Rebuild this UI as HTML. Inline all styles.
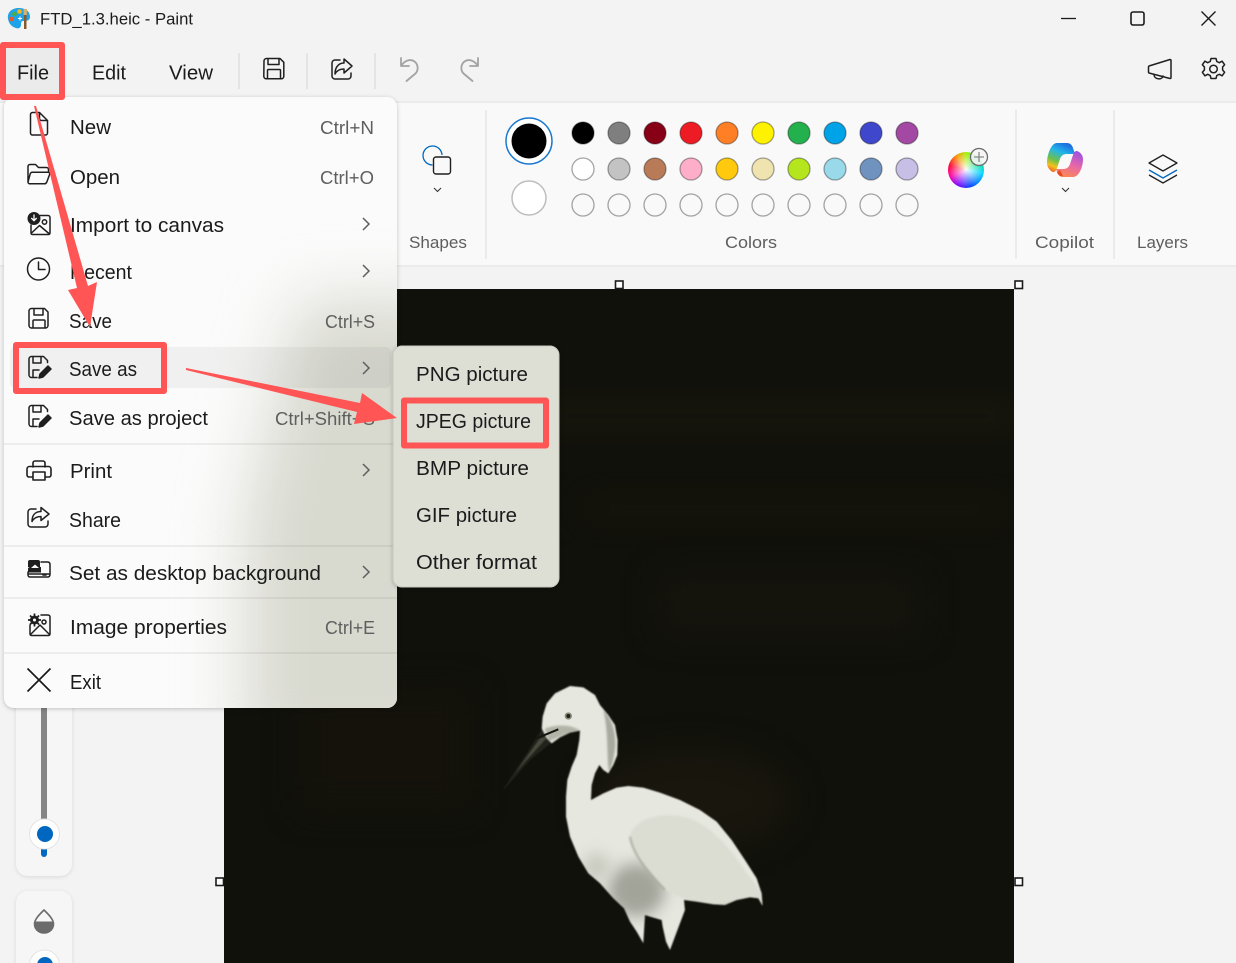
<!DOCTYPE html>
<html lang="en"><head><meta charset="utf-8"><title>FTD_1.3.heic - Paint</title>
<style>
html,body{margin:0;padding:0;width:1236px;height:963px;overflow:hidden;background:#f3f3f3}
#wheel{position:absolute;left:948px;top:152px;width:36px;height:36px;border-radius:50%;background:radial-gradient(circle,rgba(255,255,255,.95) 0,rgba(255,255,255,0) 70%),conic-gradient(#a8f000,#00e080 60deg,#00d8ff 100deg,#0040ff 165deg,#8000ff 210deg,#ff00a0 250deg,#ff0030 285deg,#ff9000 325deg,#a8f000)}
svg{position:absolute;left:0;top:0}
text{font-family:"Liberation Sans",sans-serif}
.m{font-size:20px;fill:#1b1b1b}
.s{font-size:18px;fill:#5f5f5f}
.l{font-size:17px;fill:#5e5e5e}
.i{fill:none;stroke:#1f1f1f;stroke-width:1.5;stroke-linejoin:round;stroke-linecap:round}
</style></head><body>
<svg width="1236" height="963" viewBox="0 0 1236 963" xmlns="http://www.w3.org/2000/svg">
<defs>
<filter id="b40" x="-50%" y="-50%" width="200%" height="200%" color-interpolation-filters="sRGB"><feGaussianBlur stdDeviation="32"/></filter>
<filter id="b14" x="-80%" y="-80%" width="260%" height="260%" color-interpolation-filters="sRGB"><feGaussianBlur stdDeviation="16"/></filter>
<filter id="b3" x="-100%" y="-100%" width="300%" height="300%" color-interpolation-filters="sRGB"><feGaussianBlur stdDeviation="22"/></filter>
<filter id="b1" x="-30%" y="-30%" width="160%" height="160%" color-interpolation-filters="sRGB"><feGaussianBlur stdDeviation="2"/></filter>
<filter id="soft" x="-10%" y="-10%" width="120%" height="120%" color-interpolation-filters="sRGB"><feGaussianBlur stdDeviation="2.200"/></filter>
<filter id="sh" x="-10%" y="-10%" width="120%" height="120%" color-interpolation-filters="sRGB"><feDropShadow dx="0" dy="1" stdDeviation="2" flood-color="#000" flood-opacity=".22"/></filter>
<filter id="sh2" x="-20%" y="-20%" width="140%" height="140%" color-interpolation-filters="sRGB"><feDropShadow dx="0" dy="1" stdDeviation="2" flood-color="#000" flood-opacity=".1"/></filter>
<clipPath id="mc"><rect x="4" y="97" width="393" height="611" rx="10"/></clipPath>
<clipPath id="ic"><rect x="224" y="289" width="790" height="674"/></clipPath>
<clipPath id="bc"><polygon points="185,205 188,170 200,130 225,100 270,78 310,82 345,105 360,135 385,165 405,195 413,240 412,285 400,315 385,340 370,330 358,315 345,340 335,375 333,420 370,400 410,383 445,378 490,383 540,398 600,420 660,450 710,485 755,540 795,600 830,655 845,700 848,738 835,715 810,712 770,720 735,735 700,733 650,725 612,720 615,750 600,790 585,830 570,870 558,845 548,800 545,780 510,770 495,765 490,850 470,815 450,785 432,745 400,715 360,670 325,640 295,590 270,530 258,470 258,410 262,360 275,320 290,285 298,240 300,212 270,218 240,232 215,250 200,235"/></clipPath>
<linearGradient id="cl" x1="0.6" y1="0" x2="0.2" y2="1"><stop offset="0" stop-color="#1d6fe0"/><stop offset=".3" stop-color="#21b5e8"/><stop offset=".62" stop-color="#6ec04a"/><stop offset=".82" stop-color="#f2c21a"/><stop offset="1" stop-color="#f0602a"/></linearGradient>
<linearGradient id="cr" x1="0.7" y1="0" x2="0.3" y2="1"><stop offset="0" stop-color="#a050e0"/><stop offset=".5" stop-color="#e868a8"/><stop offset="1" stop-color="#fb8a50"/></linearGradient>
</defs>

<!-- Ribbon -->
<rect x="0" y="101" width="1236" height="166" fill="#ebebeb"/>
<rect x="0" y="103" width="1236" height="162" fill="#f9f9f9"/>
<g fill="#ebebeb"><rect x="485" y="110" width="2" height="149"/><rect x="1015" y="110" width="2" height="149"/><rect x="1113" y="110" width="2" height="149"/></g>
<rect x="0" y="267" width="1236" height="696" fill="#f3f3f3"/>

<!-- Title bar -->
<path d="M8 19c-1-7 4-11 11-11 6 0 11 3 11 9 0 3-3 4-5 4l-2 0c-2 0-2 2-2 4 0 3-3 4-5 3-4-1-7-4-8-9z" fill="#1fa3e8"/>
<circle cx="14.500" cy="14" r="2.300" fill="#4caf3a"/><circle cx="19.500" cy="11.500" r="2.300" fill="#f4b81c"/><circle cx="11.500" cy="19" r="2.300" fill="#e8582a"/>
<path d="M18 18.500h4M20 16.500v4" stroke="#fff" stroke-width="1"/>
<rect x="24" y="15" width="2.500" height="14" fill="#8a5a2a"/><rect x="23.600" y="9" width="3.300" height="6" fill="#d8b070"/>
<text x="40" y="24.500" font-size="17" fill="#1b1b1b" textLength="153" lengthAdjust="spacingAndGlyphs">FTD_1.3.heic - Paint</text>
<path d="M1061 18.500h15" stroke="#1b1b1b" stroke-width="1.300"/>
<rect x="1131" y="12" width="13" height="13" rx="2" fill="none" stroke="#1b1b1b" stroke-width="1.600"/>
<path d="M1201.500 11.500l14 14M1215.500 11.500l-14 14" stroke="#1b1b1b" stroke-width="1.400"/>

<!-- Toolbar -->
<rect x="5" y="47" width="55" height="49" fill="#ebebeb"/>
<text class="m" x="17" y="79.500" textLength="32" lengthAdjust="spacingAndGlyphs">File</text>
<text class="m" x="92" y="79.500" textLength="34" lengthAdjust="spacingAndGlyphs">Edit</text>
<text class="m" x="169" y="79.500" textLength="44" lengthAdjust="spacingAndGlyphs">View</text>
<g fill="#e4e4e4"><rect x="238" y="53" width="2" height="36"/><rect x="306" y="53" width="2" height="36"/><rect x="374" y="53" width="2" height="36"/></g>
<g class="i" stroke-width="1.600">
<path d="M264 61a2.500 2.500 0 0 1 2.500-2.500h13.500l3.800 3.800v14a2.500 2.500 0 0 1-2.500 2.500h-15a2.500 2.500 0 0 1-2.500-2.500zM268 58.500v6h11v-6M267.500 78.500v-8a1 1 0 0 1 1-1h11a1 1 0 0 1 1 1v8"/>
<path d="M340 60h-5a3 3 0 0 0-3 3v13a3 3 0 0 0 3 3h13a3 3 0 0 0 3-3v-3M344 59l8 7-8 7v-4c-4 0-7 1-9 5 0-6 3-11 9-11z"/>
</g>
<g fill="none" stroke="#a3a3a3" stroke-width="1.800" stroke-linecap="round" stroke-linejoin="round">
<path d="M401 58v8h8M401.500 65.500c3-5 9-7 13-4 4 3 4 9 1 12l-9 7.500"/>
<path d="M478 58v8h-8M477.500 65.500c-3-5-9-7-13-4-4 3-4 9-1 12l9 7.500"/>
</g>
<g class="i" stroke-width="1.600">
<path d="M1149 66l21-6.500a1 1 0 0 1 1 1v17a1 1 0 0 1-1 1l-21-5.500a1 1 0 0 1-.5-1v-5a1 1 0 0 1 .5-1zM1154 74.500c0 5 8 6 9 1.500"/>
<path d="M1211 58.500h5l.8 3 2.500 1.200 2.800-1.500 2.500 3.500-2 2.300v3l2 2.300-2.500 3.500-2.800-1.500-2.500 1.200-.8 3h-5l-.8-3-2.500-1.200-2.800 1.500-2.500-3.500 2-2.300v-3l-2-2.300 2.500-3.500 2.800 1.500 2.500-1.200z"/>
<circle cx="1213.500" cy="69" r="3.800"/>
</g>

<!-- Shapes icon -->
<path d="M432.500 165a9.500 9.500 0 1 1 9.500-10" fill="none" stroke="#0067c0" stroke-width="1.300"/>
<rect x="433.500" y="157" width="17" height="17" rx="2.500" fill="#f9f9f9" stroke="#1f1f1f" stroke-width="1.400"/>
<path d="M434 188l3.500 3.500 3.500-3.500" fill="none" stroke="#333" stroke-width="1.100"/>
<text class="l" x="409" y="248" textLength="58" lengthAdjust="spacingAndGlyphs">Shapes</text>

<!-- Colors -->
<circle cx="529" cy="141" r="23" fill="#fff" stroke="#1a78cf" stroke-width="1.500"/>
<circle cx="529" cy="141" r="17.500" fill="#000"/>
<circle cx="529" cy="198" r="17" fill="#fff" stroke="#bdbdbd" stroke-width="1.500"/>
<g stroke="#000" stroke-opacity=".35" stroke-width="1.300">
<circle cx="583" cy="133" r="11" fill="#000"/><circle cx="619" cy="133" r="11" fill="#7f7f7f"/><circle cx="655" cy="133" r="11" fill="#880015"/><circle cx="691" cy="133" r="11" fill="#ed1c24"/><circle cx="727" cy="133" r="11" fill="#ff7f27"/><circle cx="763" cy="133" r="11" fill="#fff200"/><circle cx="799" cy="133" r="11" fill="#22b14c"/><circle cx="835" cy="133" r="11" fill="#00a2e8"/><circle cx="871" cy="133" r="11" fill="#3f48cc"/><circle cx="907" cy="133" r="11" fill="#a349a4"/>
<circle cx="583" cy="169" r="11" fill="#fff"/><circle cx="619" cy="169" r="11" fill="#c3c3c3"/><circle cx="655" cy="169" r="11" fill="#b97a57"/><circle cx="691" cy="169" r="11" fill="#ffaec9"/><circle cx="727" cy="169" r="11" fill="#ffc90e"/><circle cx="763" cy="169" r="11" fill="#efe4b0"/><circle cx="799" cy="169" r="11" fill="#b5e61d"/><circle cx="835" cy="169" r="11" fill="#99d9ea"/><circle cx="871" cy="169" r="11" fill="#7092be"/><circle cx="907" cy="169" r="11" fill="#c8bfe7"/>
<circle cx="583" cy="205" r="11" fill="none"/><circle cx="619" cy="205" r="11" fill="none"/><circle cx="655" cy="205" r="11" fill="none"/><circle cx="691" cy="205" r="11" fill="none"/><circle cx="727" cy="205" r="11" fill="none"/><circle cx="763" cy="205" r="11" fill="none"/><circle cx="799" cy="205" r="11" fill="none"/><circle cx="835" cy="205" r="11" fill="none"/><circle cx="871" cy="205" r="11" fill="none"/><circle cx="907" cy="205" r="11" fill="none"/>
</g>
<text class="l" x="725" y="248" textLength="52" lengthAdjust="spacingAndGlyphs">Colors</text>

<!-- Copilot -->
<path d="M1057 143h10c3 0 5 2 6 5l2 6h-8c-4 0-6 2-7 5l-3 9c-1 3-2 4-4 4-3-1-6-5-6-9 0-8 4-20 10-20z" fill="url(#cl)"/>
<path d="M1073 177h-10c-3 0-5-2-6-5l-1-3h7c4 0 6-2 7-5l3-9c1-3 2-4 4-4 3 1 6 4 6 8 0 8-4 18-10 18z" fill="url(#cr)"/>
<path d="M1060 170l3 6c-3 1-5-1-6-4z" fill="#e8482a"/>
<path d="M1062 188l3.500 3.500 3.500-3.500" fill="none" stroke="#333" stroke-width="1.100"/>
<text class="l" x="1035" y="248" textLength="59" lengthAdjust="spacingAndGlyphs">Copilot</text>

<!-- Layers -->
<path d="M1163 155l14 8-14 8-14-8z" fill="none" stroke="#1f1f1f" stroke-width="1.300" stroke-linejoin="round"/>
<path d="M1149 170l14 8 14-8" fill="none" stroke="#0067c0" stroke-width="1.300"/>
<path d="M1149 175l14 8 14-8" fill="none" stroke="#1f1f1f" stroke-width="1.300"/>
<text class="l" x="1137" y="248" textLength="51" lengthAdjust="spacingAndGlyphs">Layers</text>

<!-- Left panels -->
<rect x="16" y="650" width="56" height="226" rx="12" fill="#f6f6f6" filter="url(#sh2)"/>
<rect x="41" y="700" width="6" height="125" fill="#858585"/>
<rect x="41" y="835" width="6" height="22" rx="3" fill="#0067c0"/>
<circle cx="44.500" cy="834" r="15" fill="#fff" stroke="#e4e4e4"/>
<circle cx="45" cy="834" r="8" fill="#0067c0"/>
<rect x="16" y="891" width="56" height="90" rx="12" fill="#f6f6f6" filter="url(#sh2)"/>
<path d="M44 910C48 914 53.500 919 53.500 924a9.500 9 0 0 1-19 0C34.500 919 40 914 44 910z" fill="#f6f6f6" stroke="#6b6b6b" stroke-width="1.600" stroke-linejoin="round"/>
<path d="M34.500 921.500h19c.3 1 .3 1.500.3 2.500a9.800 9 0 0 1-19.600 0c0-1 0-1.500.3-2.500z" fill="#6b6b6b"/>
<circle cx="44.500" cy="965" r="15" fill="#fff" stroke="#e4e4e4"/>
<circle cx="45" cy="965" r="8" fill="#0067c0"/>

<!-- Canvas image -->
<rect x="224" y="289" width="790" height="674" fill="#10110b"/>
<g clip-path="url(#ic)">
<rect x="420" y="405" width="600" height="22" fill="#1c180d" filter="url(#b14)"/>
<rect x="580" y="495" width="430" height="28" fill="#15130b" filter="url(#b14)"/>
<rect x="660" y="575" width="260" height="60" fill="#15140d" filter="url(#b14)"/>
<rect x="300" y="690" width="170" height="120" fill="#14120b" filter="url(#b14)"/>
<ellipse cx="690" cy="800" rx="100" ry="50" fill="#19160d" filter="url(#b14)"/>
<g transform="translate(480 660) scale(.3333)">
<path d="M64 397L150 265 185 208 238 208 215 247 150 300z" fill="#22231b" filter="url(#soft)"/>
<path d="M105 340L180 235 205 228 140 300z" fill="#4a4b40" filter="url(#soft)"/>
<g filter="url(#soft)">
<g clip-path="url(#bc)">
<rect x="150" y="50" width="750" height="850" fill="#e6e7df"/>
<ellipse cx="470" cy="690" rx="85" ry="80" fill="#a2a399" filter="url(#b3)"/>
<ellipse cx="350" cy="620" rx="40" ry="40" fill="#c6c7bc" filter="url(#b3)"/>
<ellipse cx="740" cy="720" rx="110" ry="18" fill="#bdbeb3" filter="url(#b3)"/>
<path d="M370 150C395 175 408 215 406 260 402 295 395 320 387 335 380 300 386 215 370 150z" fill="#a9aa9f" filter="url(#b1)"/>
<path d="M450 530C460 480 530 455 610 470 680 485 750 560 800 640 830 670 842 700 846 730 810 710 760 720 710 735 650 730 590 710 555 690 510 640 460 590 450 530z" fill="#dbdcd2" filter="url(#b1)"/>
<path d="M450 530C460 590 510 640 555 690" fill="none" stroke="#a5a69b" stroke-width="5" filter="url(#b1)"/>
<path d="M300 212C270 190 225 195 195 205L205 245 250 225z" fill="#b3b4a8" filter="url(#b1)"/>
</g>
</g>
<circle cx="265" cy="168" r="11" fill="#8a8b7c"/><circle cx="265" cy="168" r="6" fill="#20211a"/>
<path d="M170 235L235 208" stroke="#15150f" stroke-width="6"/>
</g>
</g>
<g fill="#fff" stroke="#1a1a1a" stroke-width="1.600">
<rect x="615.500" y="281" width="7.500" height="7.500"/><rect x="1015" y="281" width="7.500" height="7.500"/><rect x="216" y="878" width="7.500" height="7.500"/><rect x="1015" y="878" width="7.500" height="7.500"/>
</g>

<!-- File menu -->
<rect x="4" y="97" width="393" height="611" rx="10" fill="#fbfbfb" filter="url(#sh)"/>
<g clip-path="url(#mc)">
<path d="M300 300L460 300 460 760 245 760 245 520z" fill="#d8d9cf" filter="url(#b40)"/>
<rect x="10" y="347" width="381" height="41" rx="5" fill="#000" fill-opacity=".045"/>
<g fill="#000" fill-opacity=".055"><rect x="4" y="443" width="393" height="2"/><rect x="4" y="545" width="393" height="2"/><rect x="4" y="597" width="393" height="2"/><rect x="4" y="652" width="393" height="2"/></g>
</g>
<text class="m" x="70" y="134" textLength="41" lengthAdjust="spacingAndGlyphs">New</text>
<text class="m" x="70" y="184" textLength="50" lengthAdjust="spacingAndGlyphs">Open</text>
<text class="m" x="70" y="232" textLength="154" lengthAdjust="spacingAndGlyphs">Import to canvas</text>
<text class="m" x="70" y="279" textLength="62" lengthAdjust="spacingAndGlyphs">Recent</text>
<text class="m" x="69" y="328" textLength="43" lengthAdjust="spacingAndGlyphs">Save</text>
<text class="m" x="69" y="376" textLength="68" lengthAdjust="spacingAndGlyphs">Save as</text>
<text class="m" x="69" y="425" textLength="139" lengthAdjust="spacingAndGlyphs">Save as project</text>
<text class="m" x="70" y="478" textLength="42" lengthAdjust="spacingAndGlyphs">Print</text>
<text class="m" x="69" y="527" textLength="52" lengthAdjust="spacingAndGlyphs">Share</text>
<text class="m" x="69" y="580" textLength="252" lengthAdjust="spacingAndGlyphs">Set as desktop background</text>
<text class="m" x="70" y="634" textLength="157" lengthAdjust="spacingAndGlyphs">Image properties</text>
<text class="m" x="70" y="689" textLength="31" lengthAdjust="spacingAndGlyphs">Exit</text>
<text class="s" x="320" y="134" textLength="54" lengthAdjust="spacingAndGlyphs">Ctrl+N</text>
<text class="s" x="320" y="184" textLength="54" lengthAdjust="spacingAndGlyphs">Ctrl+O</text>
<text class="s" x="325" y="328" textLength="50" lengthAdjust="spacingAndGlyphs">Ctrl+S</text>
<text class="s" x="275" y="425" textLength="100" lengthAdjust="spacingAndGlyphs">Ctrl+Shift+S</text>
<text class="s" x="325" y="634" textLength="50" lengthAdjust="spacingAndGlyphs">Ctrl+E</text>
<g fill="none" stroke="#5f5f5f" stroke-width="1.500">
<path d="M363 218l6 6-6 6M363 265l6 6-6 6M363 362l6 6-6 6M363 464l6 6-6 6M363 566l6 6-6 6"/>
</g>

<!-- Menu icons -->
<g class="i">
<path d="M32.500 112.500h7l8 8v12.500a2 2 0 0 1-2 2h-13a2 2 0 0 1-2-2v-18.500a2 2 0 0 1 2-2zM39.500 112.500v6a2 2 0 0 0 2 2h6"/>
<path d="M28 182v-15.500a2 2 0 0 1 2-2h5.500l3 3h8a2 2 0 0 1 2 2v2M28 182a1.800 1.800 0 0 0 2 1.800h14.500c1 0 2-1 2.400-2l2.800-7.500c.3-1-.5-2-1.500-2h-16c-1 0-1.500.5-2 1.500z"/>
<path d="M40 215.500h8a2 2 0 0 1 2 2v15.500a1.500 1.500 0 0 1-1.500 1.500h-16a1.500 1.500 0 0 1-1.500-1.500v-8M31.500 233l8-7.500 10 8.500"/>
<circle cx="44.500" cy="222" r="2.200"/>
<circle cx="38.500" cy="269" r="11"/><path d="M38.500 262v7.500h6.500"/>
<path d="M29 311a2.500 2.500 0 0 1 2.500-2.500h13l3.500 3.500v13.500a2.500 2.500 0 0 1-2.500 2.500h-14a2.500 2.500 0 0 1-2.500-2.500zM34 309v6h9v-6M33 328v-7a1 1 0 0 1 1-1h10a1 1 0 0 1 1 1v7"/>
<path d="M29 359a2.500 2.500 0 0 1 2.500-2.500h12l4 4v2M33 357v6h8v-6M33 377v-7h6M37 377.500h-5.500a2.500 2.500 0 0 1-2.500-2.500v-16"/>
<path d="M29 408a2.500 2.500 0 0 1 2.500-2.500h12l4 4v2M33 406v6h8v-6M33 426v-7h6M37 426.500h-5.500a2.500 2.500 0 0 1-2.500-2.500v-16"/>
<path d="M33 467v-4a2 2 0 0 1 2-2h8a2 2 0 0 1 2 2v4M33 477h-4a2 2 0 0 1-2-2v-6a2.500 2.500 0 0 1 2.500-2.500h19a2.500 2.500 0 0 1 2.500 2.500v6a2 2 0 0 1-2 2h-4M33 472h12v8h-12z" stroke-width="1.600"/>
<path d="M36 509h-5a3 3 0 0 0-3 3v12a3 3 0 0 0 3 3h14a3 3 0 0 0 3-3v-3M41 507.500l8 6.500-8 6.500v-4c-4 0-7 1-9 5 0-6 3-10 9-10z"/>
<path d="M41 562h7a2.500 2.500 0 0 1 2 2.500v10a2.500 2.500 0 0 1-2 2.500h-18a2 2 0 0 1-2-2v-3M28 574h22M43 575h3"/>
<path d="M41 615h7a2 2 0 0 1 2 2v17a1.500 1.500 0 0 1-1.500 1.500h-17a1.500 1.500 0 0 1-1.500-1.500v-9M31 634l9-9 9 9"/>
<circle cx="44" cy="622" r="2"/>
</g>
<path d="M39 378l1-4 8-8 3 3-8 8zM39 427l1-4 8-8 3 3-8 8z" fill="#1f1f1f" stroke="#1f1f1f" stroke-width="1.500" stroke-linejoin="round"/>
<path d="M28 569.500a2 2 0 0 1 2-2.500h11v5.500H28zM30 560h8a2 2 0 0 1 2 2v5H28v-5a2 2 0 0 1 2-2z" fill="#1f1f1f"/>
<path d="M31 568l4-3.500 4 3.500z" fill="#fbfbfb"/>
<circle cx="34" cy="218.500" r="6.500" fill="#1f1f1f"/>
<path d="M34 214.500v6M31.300 218l2.700 2.700 2.700-2.700" fill="none" stroke="#fff" stroke-width="1.300"/>
<circle cx="34.500" cy="620" r="4.500" fill="#1f1f1f"/>
<path d="M34.500 613.500v13M28 620h13M30 615.500l9 9M39 615.500l-9 9" stroke="#1f1f1f" stroke-width="1.700"/>
<circle cx="34.500" cy="620" r="1.500" fill="#fff"/>
<path d="M27.500 668.500l23 23M50.500 668.500l-23 23" stroke="#1a1a1a" stroke-width="1.700" fill="none"/>

<!-- Submenu -->
<rect x="393" y="346" width="166" height="241" rx="9" fill="#dddfd5" stroke="#c8c9bf" filter="url(#sh)"/>
<text class="m" x="416" y="381" textLength="112" lengthAdjust="spacingAndGlyphs">PNG picture</text>
<text class="m" x="416" y="428" textLength="115" lengthAdjust="spacingAndGlyphs">JPEG picture</text>
<text class="m" x="416" y="475" textLength="113" lengthAdjust="spacingAndGlyphs">BMP picture</text>
<text class="m" x="416" y="522" textLength="101" lengthAdjust="spacingAndGlyphs">GIF picture</text>
<text class="m" x="416" y="569" textLength="121" lengthAdjust="spacingAndGlyphs">Other format</text>

<!-- Annotations -->
<g fill="none" stroke="#ff5555" stroke-width="6" stroke-linejoin="round">
<rect x="3" y="45" width="59" height="52"/>
<rect x="16" y="345" width="148" height="46"/>
<rect x="404" y="400.500" width="142" height="45"/>
</g>
<path d="M34 106L36 106 88 286 97 282 90 327 68 290 77 288z" fill="#ff5555"/>
<path d="M186 368L360 403 362 393 397 418 354 424 357 412 186 370z" fill="#ff5555"/>
</svg>
<div id="wheel"></div>
<svg width="1236" height="963" viewBox="0 0 1236 963" xmlns="http://www.w3.org/2000/svg" style="pointer-events:none">
<circle cx="979" cy="157" r="8.500" fill="#f4f4f4" fill-opacity=".9" stroke="#6b6b6b" stroke-width="1.300"/>
<path d="M974 157h10M979 152v10" stroke="#8a8a8a" stroke-width="1.300"/>
</svg>
</body></html>
